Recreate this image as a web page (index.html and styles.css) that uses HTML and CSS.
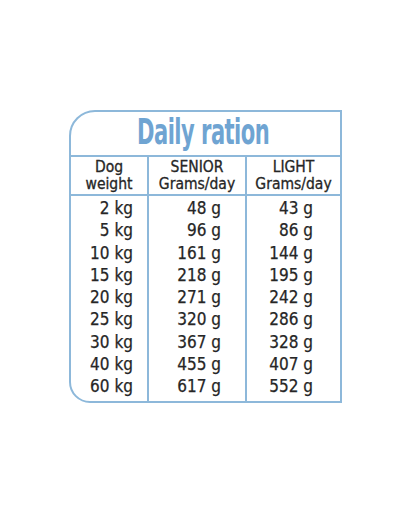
FILE: index.html
```html
<!DOCTYPE html>
<html lang="en">
<head>
<meta charset="utf-8">
<title>Daily ration</title>
<link rel="stylesheet" href="styles.css">
</head>
<body>
<div class="card">
  <div class="title"><span class="title-text">Daily ration</span></div>
  <div class="cols">
    <div class="col c1">
      <div class="head">Dog<br>weight</div>
      <div class="body">
        <div class="cell">2 kg</div>
        <div class="cell">5 kg</div>
        <div class="cell">10 kg</div>
        <div class="cell">15 kg</div>
        <div class="cell">20 kg</div>
        <div class="cell">25 kg</div>
        <div class="cell">30 kg</div>
        <div class="cell">40 kg</div>
        <div class="cell">60 kg</div>
      </div>
    </div>
    <div class="col c2">
      <div class="head">SENIOR<br>Grams/day</div>
      <div class="body">
        <div class="cell">48 g</div>
        <div class="cell">96 g</div>
        <div class="cell">161 g</div>
        <div class="cell">218 g</div>
        <div class="cell">271 g</div>
        <div class="cell">320 g</div>
        <div class="cell">367 g</div>
        <div class="cell">455 g</div>
        <div class="cell">617 g</div>
      </div>
    </div>
    <div class="col c3">
      <div class="head">LIGHT<br>Grams/day</div>
      <div class="body">
        <div class="cell">43 g</div>
        <div class="cell">86 g</div>
        <div class="cell">144 g</div>
        <div class="cell">195 g</div>
        <div class="cell">242 g</div>
        <div class="cell">286 g</div>
        <div class="cell">328 g</div>
        <div class="cell">407 g</div>
        <div class="cell">552 g</div>
      </div>
    </div>
  </div>
</div>
</body>
</html>
```
FILE: styles.css
```css
html, body {
  margin: 0;
  padding: 0;
  background: #ffffff;
}
body {
  width: 405px;
  height: 512px;
  padding: 110px 0 0 69px;
  box-sizing: border-box;
  font-family: "DejaVu Sans Condensed", "DejaVu Sans", "Liberation Sans Narrow", sans-serif;
  font-stretch: condensed;
  color: #262626;
}
.card {
  width: 273px;
  height: 293px;
  box-sizing: border-box;
  border: 2px solid #8db8da;
  border-radius: 26px 0 0 21px;
  overflow: hidden;
  display: flex;
  flex-direction: column;
}
.title {
  height: 43px;
  box-sizing: border-box;
  padding: 0 0 5px 66px;
  display: flex;
  align-items: center;
  white-space: nowrap;
}
.title-text {
  display: inline-block;
  font-size: 36px;
  font-weight: bold;
  color: #6fa4d2;
  letter-spacing: -0.8px;
  transform: scaleX(0.65);
  transform-origin: left center;
}
.cols {
  flex: 1;
  display: grid;
  grid-template-columns: 76px 98px 1fr;
}
.col {
  display: flex;
  flex-direction: column;
}
.c2, .c3 {
  border-left: 2px solid #8db8da;
}
.head {
  height: 35px;
  padding-top: 2px;
  border-top: 2px solid #8db8da;
  border-bottom: 2px solid #8db8da;
  text-align: center;
  font-size: 15.5px;
  line-height: 16.5px;
  -webkit-text-stroke: 0.3px #262626;
}
.body {
  padding-top: 1px;
}
.cell {
  height: 22.25px;
  line-height: 22.25px;
  text-align: right;
  font-size: 17px;
  -webkit-text-stroke: 0.25px #262626;
}
.c1 .cell { padding-right: 14px; }
.c2 .cell { padding-right: 24px; }
.c3 .cell { padding-right: 27px; }
```
